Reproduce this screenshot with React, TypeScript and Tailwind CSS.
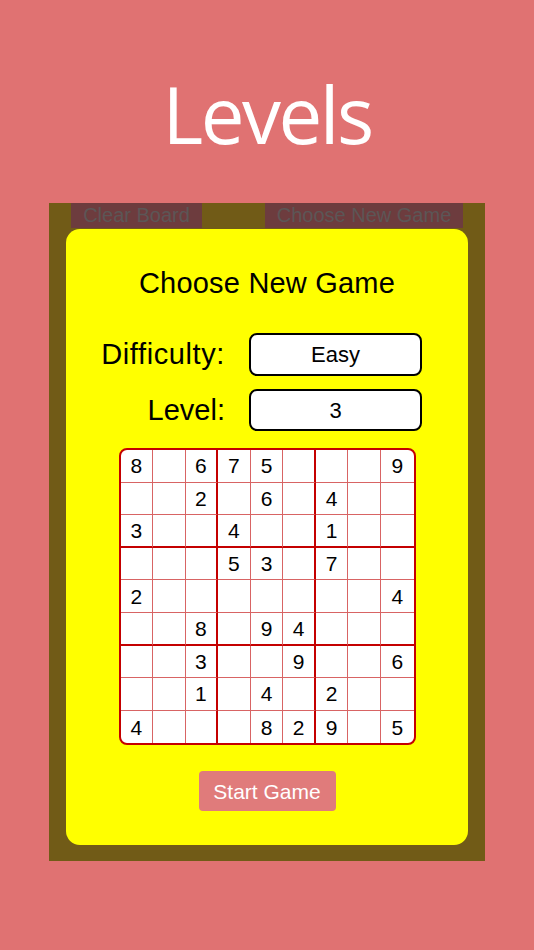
import React from 'react';

const board: (number | null)[][] = [
  [8, null, 6, 7, 5, null, null, null, 9],
  [null, null, 2, null, 6, null, 4, null, null],
  [3, null, null, 4, null, null, 1, null, null],
  [null, null, null, 5, 3, null, 7, null, null],
  [2, null, null, null, null, null, null, null, 4],
  [null, null, 8, null, 9, 4, null, null, null],
  [null, null, 3, null, null, 9, null, null, 6],
  [null, null, 1, null, 4, null, 2, null, null],
  [4, null, null, null, 8, 2, 9, null, 5],
];

const cellClass = (r: number, c: number) => {
  const right = c === 8 ? '' : c === 2 || c === 5 ? 'border-r-2 border-r-[#c40000]' : 'border-r border-r-[#d86464]';
  const bottom = r === 8 ? '' : r === 2 || r === 5 ? 'border-b-2 border-b-[#c40000]' : 'border-b border-b-[#d86464]';
  return `h-[32.6px] flex items-center justify-center ${right} ${bottom}`;
};

const SudokuGrid: React.FC = () => (
  <div className="w-[297px] rounded-[8px] border-2 border-[#c40000] bg-white overflow-hidden grid grid-cols-9">
    {board.map((row, r) =>
      row.map((v, c) => (
        <div key={`${r}-${c}`} className={cellClass(r, c)}>
          <span className="text-[21px] leading-none text-black">{v ?? ''}</span>
        </div>
      ))
    )}
  </div>
);

export default function App() {
  return (
    <div className="w-[534px] h-[950px] bg-[#e07272] font-['Liberation_Sans',Arial,sans-serif] overflow-hidden">
      <div className="h-[203px] flex justify-center pt-[75px]">
        <h1 className="text-[78px] leading-none text-white font-['Open_Sans',sans-serif] tracking-[-2.5px]">Levels</h1>
      </div>

      <div className="ml-[49px] w-[436px] h-[658px] bg-[#715b17] flex flex-col">
        <div className="h-[25px] flex">
          <div className="ml-[22px] w-[131px] bg-[#6d3c3e] flex items-center justify-center pb-[2px] text-[20px] text-[#5c5656]">
            Clear Board
          </div>
          <div className="ml-[63px] w-[198px] bg-[#6d3c3e] flex items-center justify-center pb-[2px] text-[20px] text-[#5c5656]">
            Choose New Game
          </div>
        </div>

        <div className="mt-[1px] mx-[17px] h-[616px] rounded-[14px] bg-[#ffff00] flex flex-col items-center">
          <h2 className="mt-[38px] text-[29px] leading-[32px] tracking-[0.2px] text-black">Choose New Game</h2>

          <div className="self-stretch mt-[34px] flex flex-col gap-[13px]">
            <div className="flex items-center">
              <span className="w-[159px] text-right text-[29px] leading-none tracking-[0.6px] text-black">Difficulty:</span>
              <div className="ml-[24px] w-[173px] h-[43px] rounded-[8px] border-2 border-black bg-white flex items-center justify-center text-[22px] text-black">
                Easy
              </div>
            </div>
            <div className="flex items-center">
              <span className="w-[159px] text-right text-[29px] leading-none text-black">Level:</span>
              <div className="ml-[24px] w-[173px] h-[42px] rounded-[8px] border-2 border-black bg-white flex items-center justify-center text-[22px] text-black">
                3
              </div>
            </div>
          </div>

          <div className="mt-[17px]">
            <SudokuGrid />
          </div>

          <button className="mt-[26px] w-[137px] h-[40px] rounded-[4px] bg-[#e07b7b] text-white text-[21px]">
            Start Game
          </button>
        </div>
      </div>
    </div>
  );
}
